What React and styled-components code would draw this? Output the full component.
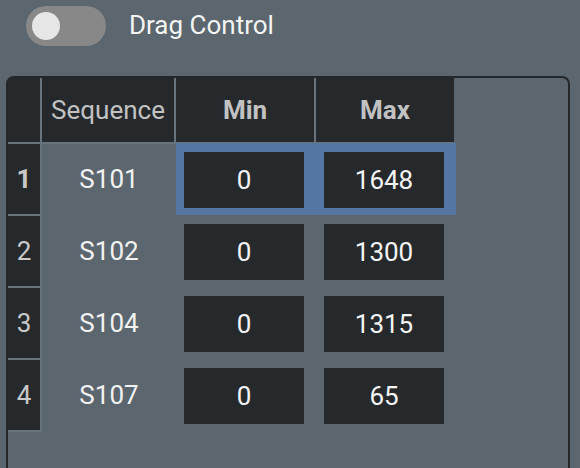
import React from 'react';
import styled, { createGlobalStyle } from 'styled-components';

const rows = [
  { id: 1, seq: 'S101', min: 0, max: 1648, selected: true },
  { id: 2, seq: 'S102', min: 0, max: 1300 },
  { id: 3, seq: 'S104', min: 0, max: 1315 },
  { id: 4, seq: 'S107', min: 0, max: 65 }
];

const App = () => {
  return (
    <>
      <GlobalStyle />
      <Page>
        <ToggleRow>
          <Track>
            <Thumb />
          </Track>
          <ToggleLabel>Drag Control</ToggleLabel>
        </ToggleRow>

        <Panel>
          <Row>
            <NumCell />
            <HeaderCell>Sequence</HeaderCell>
            <HeaderCell bold>Min</HeaderCell>
            <HeaderCell bold last>Max</HeaderCell>
          </Row>
          {rows.map(row => (
            <Row key={row.id} body>
              <NumCell selected={row.selected}>{row.id}</NumCell>
              <SeqCell>{row.seq}</SeqCell>
              <ValueCell selected={row.selected}>
                <ValueInput readOnly value={row.min} />
              </ValueCell>
              <ValueCell selected={row.selected}>
                <ValueInput readOnly value={row.max} />
              </ValueCell>
            </Row>
          ))}
        </Panel>
      </Page>
    </>
  );
};

const GlobalStyle = createGlobalStyle`
  html, body {
    margin: 0;
    background: #5b666e;
    height: 100%;
    overflow: hidden;
  }
  body {
    font-family: Roboto, "Liberation Sans", sans-serif;
  }
`;

const Page = styled.div`
  padding: 6px 0 0 6px;
`;

const ToggleRow = styled.div`
  display: flex;
  align-items: center;
  gap: 23px;
  padding-left: 20px;
  height: 40px;
`;

const Track = styled.div`
  width: 80px;
  height: 40px;
  border-radius: 20px;
  background: #888888;
  display: flex;
  align-items: center;
  padding-left: 6px;
  box-sizing: border-box;
`;

const Thumb = styled.div`
  width: 28px;
  height: 28px;
  border-radius: 50%;
  background: #e6e6e6;
`;

const ToggleLabel = styled.span`
  font-size: 26px;
  color: #f4f4f4;
  line-height: 1;
  margin-top: -2px;
`;

const Panel = styled.div`
  margin-top: 30px;
  width: 564px;
  height: 392px;
  box-sizing: border-box;
  border: 2px solid #25282b;
  border-bottom: none;
  border-radius: 8px 8px 0 0;
`;

const Row = styled.div`
  display: grid;
  grid-template-columns: 34px 134px 140px 140px;
  height: ${props => (props.body ? '72px' : '66px')};
`;

const sep = '#68747c';

const NumCell = styled.div`
  box-sizing: border-box;
  background: #26292c;
  border-right: 2px solid ${sep};
  border-bottom: 2px solid ${sep};
  display: flex;
  align-items: center;
  justify-content: center;
  font-size: 26px;
  color: #c9c9c9;
  font-weight: ${props => (props.selected ? 700 : 400)};
`;

const HeaderCell = styled.div`
  box-sizing: border-box;
  background: #26292c;
  border-right: ${props => (props.last ? 'none' : `2px solid ${sep}`)};
  border-bottom: 2px solid ${sep};
  margin-right: ${props => (props.last ? '2px' : '0')};
  display: flex;
  align-items: center;
  justify-content: center;
  font-size: 26px;
  color: #c2c2c2;
  font-weight: ${props => (props.bold ? 700 : 400)};
`;

const SeqCell = styled.div`
  display: flex;
  align-items: center;
  justify-content: center;
  font-size: 26px;
  color: #f2f2f2;
  padding-bottom: 2px;
`;

const ValueCell = styled.div`
  box-sizing: border-box;
  padding: 8px 0 0 8px;
  background: ${props => (props.selected ? '#5576a3' : 'transparent')};
  height: ${props => (props.selected ? '72px' : 'auto')};
  margin-top: ${props => (props.selected ? '-1px' : '0')};
  padding-top: ${props => (props.selected ? '9px' : '8px')};
`;

const ValueInput = styled.input`
  display: block;
  width: 120px;
  height: 56px;
  box-sizing: border-box;
  border: none;
  outline: none;
  margin: 0;
  padding: 0;
  background: #26292c;
  color: #f4f4f4;
  font-family: Roboto, "Liberation Sans", sans-serif;
  font-size: 26px;
  text-align: center;
`;

export default App;
